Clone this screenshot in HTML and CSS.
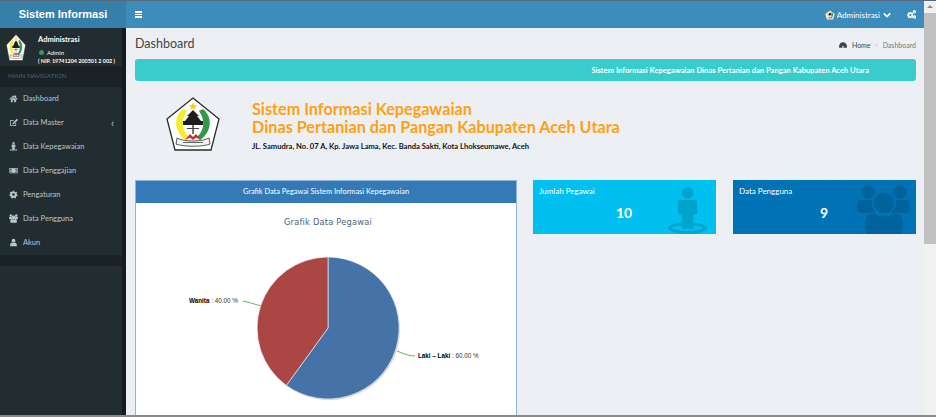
FILE: index.html
```html
<!DOCTYPE html>
<html lang="en">
<head>
    <meta charset="UTF-8">
    <meta name="viewport" content="width=device-width, initial-scale=1.0">
    <title>Sistem Informasi</title>
    <link rel="stylesheet" href="styles.css">
</head>
<body>

    <!-- Shared icons -->
    <svg class="icon-defs" aria-hidden="true">
        <symbol id="logo" viewBox="0 0 54 54" preserveAspectRatio="none">
            <path d="M27 1 L53 22 L45 53 L9 53 L1 22 Z" fill="#fff" stroke="#2b2b2b" stroke-width="1.3"/>
            <path d="M17 12 C7 20 8 35 20 43 L23 40 C15 33 15 22 21 14 Z" fill="#f7ec2c"/>
            <path d="M37 12 C47 20 46 35 34 43 L31 40 C39 33 39 22 33 14 Z" fill="#2f9a48"/>
            <path d="M27 5 l1.200 3 3.200 .2 -2.500 2 .8 3.100 -2.700 -1.700 -2.700 1.700 .8 -3.100 -2.500 -2 3.200 -.2 Z" fill="#f3d21f"/>
            <path d="M27 13 L33 19 L31 19 L35 24 L37 24 L37 28 L17 28 L17 24 L19 24 L23 19 L21 19 Z" fill="#1d1d1d"/>
            <rect x="26.300" y="28" width="1.500" height="9" fill="#444"/>
            <rect x="21" y="31" width="12" height="1" fill="#444"/>
            <path d="M19 43 L24 37 L27 40 L30 37 L35 43 L30 40.500 L27 43 L24 40.500 Z" fill="#d4242a"/>
            <path d="M11 41 C18 45 36 45 43 41 L44 47 C36 50 18 50 10 47 Z" fill="#f4f4f4" stroke="#333" stroke-width=".8"/>
            <rect x="17" y="45" width="20" height="1" fill="#666"/>
        </symbol>
        <symbol id="i-home" viewBox="0 0 24 24"><path d="M12 3 L1 13 L3 15 L12 7 L21 15 L23 13 L19 9.500 V4 H16 V6.500 Z M5 15.500 V22 H10 V16 H14 V22 H19 V15.500 L12 9.500 Z"/></symbol>
        <symbol id="i-edit" viewBox="0 0 24 24"><path d="M3 5 H14 L12 7 H5 V19 H17 V14 L19 12 V21 H3 Z M21 2 L24 5 L13 16 L9 17 L10 13 Z"/></symbol>
        <symbol id="i-street" viewBox="0 0 40 48"><circle cx="20" cy="6" r="6"/><path d="M13 13 H27 C29 13 30 14 30 16 V26 C30 27.500 29 28 27 28 H26 V41 C26 42 25 43 24 43 H16 C15 43 14 42 14 41 V28 H13 C11 28 10 27.500 10 26 V16 C10 14 11 13 13 13 Z"/><path fill-rule="evenodd" d="M20 36 C31 36 40 38.500 40 42 C40 45.500 31 48 20 48 C9 48 0 45.500 0 42 C0 38.500 9 36 20 36 Z M20 39 C11 39 4 40.500 4 42 C4 43.500 11 45 20 45 C29 45 36 43.500 36 42 C36 40.500 29 39 20 39 Z"/></symbol>
        <symbol id="i-money" viewBox="0 0 24 24"><path fill-rule="evenodd" d="M1 5 H23 V19 H1 Z M3 7 V17 H21 V7 Z M12 8 A4 4.500 0 1 1 12 16.500 A4 4.500 0 1 1 12 8 Z M4 9 V15 L7 15 C7.500 13 7.500 11 7 9 Z M20 9 H17 C16.500 11 16.500 13 17 15 H20 Z"/></symbol>
        <symbol id="i-cog" viewBox="0 0 24 24"><path fill-rule="evenodd" d="M10 2 H14 L14.600 5 L17 6 L19.600 4.400 L22 7 L20 9.500 L21 12 L23 13.500 L22 16 L19.500 16.500 L18 19 L18.500 21 L15 22.500 L13.500 20.500 H10.500 L9 22.500 L5.500 21 L6 18.500 L4 16.500 L1.500 16 L1 12.500 L3.400 11 L3.800 8.500 L2 6.500 L5 4 L7 5.500 L9.500 4.500 Z M12 8.500 A3.500 3.500 0 1 0 12 15.500 A3.500 3.500 0 1 0 12 8.500 Z"/></symbol>
        <symbol id="i-users" viewBox="0 0 53 50"><circle cx="11" cy="7" r="7"/><circle cx="43" cy="7" r="7"/><path d="M0 20 C0 17 2 15 5 15 H16 C15 20 16 25 19 28 H4 C1 28 0 26 0 24 Z M53 20 C53 17 51 15 48 15 H37 C38 20 37 25 34 28 H49 C52 28 53 26 53 24 Z"/><circle cx="27" cy="18" r="11" stroke="currentColor" stroke-width="1.500"/><path d="M16 28 C20 32 34 32 38 28 C43 28 46 32 46 38 V46 C46 48 44 50 42 50 H12 C10 50 8 48 8 46 V38 C8 32 11 28 16 28 Z" stroke="currentColor" stroke-width="1"/></symbol>
        <symbol id="i-user" viewBox="0 0 24 24"><circle cx="12" cy="7" r="5"/><path d="M7 12 C9 14 15 14 17 12 C20 13 21 16 21 22 H3 C3 16 4 13 7 12 Z"/></symbol>
        <symbol id="i-cogs" viewBox="0 0 24 24"><path fill-rule="evenodd" d="M7 5 H11 L11.500 7.500 L14 6.500 L16.500 9 L15 11 L17 12 V15.500 L15 16 L16.500 18.500 L14 21 L11.500 19.500 L11 22 H7 L6.500 19.500 L4 21 L1.500 18.500 L3 16 L0 15.500 V12 L3 11 L1.500 9 L4 6.500 L6.500 7.500 Z M9 10.500 A3 3 0 1 0 9 16.500 A3 3 0 1 0 9 10.500 Z"/><path fill-rule="evenodd" d="M19.500 0 A4.500 4.500 0 1 1 19.500 9 A4.500 4.500 0 1 1 19.500 0 Z M19.500 3 A1.500 1.500 0 1 0 19.500 6 A1.500 1.500 0 1 0 19.500 3 Z"/><path fill-rule="evenodd" d="M20 14 A4.500 4.500 0 1 1 20 23 A4.500 4.500 0 1 1 20 14 Z M20 17 A1.500 1.500 0 1 0 20 20 A1.500 1.500 0 1 0 20 17 Z"/></symbol>
        <symbol id="i-gauge" viewBox="0 0 24 24"><path fill-rule="evenodd" d="M12 4 C5 4 0 10 0 17 C0 18 .3 19 .8 20 H23.200 C23.700 19 24 18 24 17 C24 10 19 4 12 4 Z M12 15 A2.500 2.500 0 1 0 12 20 A2.500 2.500 0 1 0 12 15 Z"/></symbol>
    </svg>

    <div class="window">
        <!-- Sidebar -->
        <aside class="sidebar">
            <div class="brand">Sistem Informasi</div>
            <div class="user-panel">
                <svg class="user-logo"><use href="#logo"/></svg>
                <div class="user-info">
                    <p class="user-name">Administrasi</p>
                    <p class="user-role"><span class="dot"></span>Admin</p>
                    <p class="user-nip">( NIP. 19741204 200501 2 002 )</p>
                </div>
            </div>
            <div class="nav-header">MAIN NAVIGATION</div>
            <nav class="menu">
                <a href="#"><svg class="ico"><use href="#i-home"/></svg>Dashboard</a>
                <a href="#"><svg class="ico"><use href="#i-edit"/></svg>Data Master<span class="caret">&#8249;</span></a>
                <a href="#"><svg class="ico"><use href="#i-street"/></svg>Data Kepegawaian</a>
                <a href="#"><svg class="ico"><use href="#i-money"/></svg>Data Penggajian</a>
                <a href="#"><svg class="ico"><use href="#i-cog"/></svg>Pengaturan</a>
                <a href="#"><svg class="ico"><use href="#i-users"/></svg>Data Pengguna</a>
                <a href="#"><svg class="ico"><use href="#i-user"/></svg>Akun</a>
            </nav>
            <div class="menu-foot"></div>
        </aside>

        <div class="main">
            <!-- Navbar -->
            <header class="navbar">
                <div class="burger"><span></span><span></span><span></span></div>
                <div class="nav-right">
                    <svg class="nav-logo"><use href="#logo"/></svg>
                    <span class="nav-user">Administrasi</span>
                    <svg class="chevron" viewBox="0 0 10 6"><path d="M1 1 L5 5 L9 1" fill="none" stroke="#fff" stroke-width="2"/></svg>
                    <svg class="nav-cogs"><use href="#i-cogs"/></svg>
                </div>
            </header>

            <!-- Page content -->
            <main class="content">
                <div class="title-row">
                    <h1>Dashboard</h1>
                    <div class="crumbs">
                        <svg class="crumb-ico"><use href="#i-gauge"/></svg>
                        <span>Home</span>
                        <span class="sep">&gt;</span>
                        <span class="crumb-active">Dashboard</span>
                    </div>
                </div>

                <div class="marquee">Sistem Informasi Kepegawaian Dinas Pertanian dan Pangan Kabupaten Aceh Utara</div>

                <section class="agency">
                    <svg class="agency-logo"><use href="#logo"/></svg>
                    <div class="agency-text">
                        <h2>Sistem Informasi Kepegawaian<br>Dinas Pertanian dan Pangan Kabupaten Aceh Utara</h2>
                        <p>JL. Samudra, No. 07 A, Kp. Jawa Lama, Kec. Banda Sakti, Kota Lhokseumawe, Aceh</p>
                    </div>
                </section>

                <div class="columns">
                    <section class="panel">
                        <div class="panel-head">Grafik Data Pegawai Sistem Informasi Kepegawaian</div>
                        <div class="panel-body">
                            <svg class="chart" viewBox="0 0 380 215">
                                <text class="chart-title" x="192" y="22" text-anchor="middle">Grafik Data Pegawai</text>
                                <path class="leader" d="M107 98 C112 99 118 101 125 103"/>
                                <path class="leader" d="M261 148 C266 150 272 153 279 153"/>
                                <circle cx="193" cy="126" r="71" fill="#cfcfcf"/>
                                <path d="M192 54 A71 71 0 1 1 150.300 182.400 L192 125 Z" fill="#4572a7" stroke="#fff" stroke-width=".6"/>
                                <path d="M192 125 L150.300 182.400 A71 71 0 0 1 192 54 Z" fill="#aa4643" stroke="#fff" stroke-width=".6"/>
                                <text class="chart-label" x="53" y="100"><tspan class="strong">Wanita</tspan> : 40.00 %</text>
                                <text class="chart-label" x="282" y="155"><tspan class="strong">Laki – Laki</tspan> : 60.00 %</text>
                            </svg>
                        </div>
                    </section>

                    <div class="stat stat-cyan">
                        <p class="stat-label">Jumlah Pegawai</p>
                        <p class="stat-value">10</p>
                        <svg class="stat-ico ico-street"><use href="#i-street"/></svg>
                    </div>
                    <div class="stat stat-blue">
                        <p class="stat-label">Data Pengguna</p>
                        <p class="stat-value">9</p>
                        <svg class="stat-ico ico-users"><use href="#i-users"/></svg>
                    </div>
                </div>
            </main>
        </div>

        <!-- Scrollbar -->
        <div class="scrollbar">
            <div class="scroll-up"></div>
            <div class="scroll-thumb"></div>
        </div>
    </div>
</body>
</html>
```

FILE: styles.css
```css
/* Reset and global styling */
* {
    margin: 0;
    padding: 0;
    box-sizing: border-box;
}
html, body {
    height: 100%;
    overflow: hidden;
}
body {
    font-family: Lato, 'Noto Sans', Arial, sans-serif;
    background-color: #ecf0f5;
    color: #333;
}
.icon-defs {
    display: none;
}
.window {
    display: flex;
    height: 417px;
    border-top: 1px solid #56697a;
    border-bottom: 2px solid #8a8a8a;
    overflow: hidden;
}

/* Sidebar styling */
.sidebar {
    width: 126px;
    flex-shrink: 0;
    background-color: #222d32;
    border-right: 4px solid #151c1f;
    color: #b8c7ce;
}
.brand {
    height: 27px;
    margin-right: -4px;
    background-color: #367fa9;
    color: #fff;
    font-family: 'Liberation Sans', Arial, sans-serif;
    font-size: 11px;
    font-weight: bold;
    line-height: 27px;
    text-align: center;
}
.user-panel {
    display: flex;
    height: 38px;
    padding: 6px 0 0 6px;
    gap: 12px;
}
.user-logo {
    width: 20px;
    height: 27px;
    flex-shrink: 0;
}
.user-info {
    color: #fff;
}
.user-name {
    font-size: 7.500px;
    font-weight: 700;
    line-height: 10px;
    margin-top: 1px;
}
.user-role {
    padding-left: 1px;
    font-size: 6px;
    line-height: 8px;
    margin-top: 4px;
}
.dot {
    display: inline-block;
    width: 5px;
    height: 5px;
    margin-right: 3px;
    border-radius: 50%;
    background-color: #3c9a4a;
}
.user-nip {
    font-size: 5.400px;
    font-weight: 700;
    line-height: 8px;
    white-space: nowrap;
}
.nav-header {
    height: 21px;
    padding-left: 8px;
    background-color: #1a2226;
    color: #4b646f;
    font-size: 6.500px;
    line-height: 20px;
}
.menu {
    display: flex;
    flex-direction: column;
}
.menu a {
    display: flex;
    align-items: center;
    height: 24px;
    padding: 0 0 2px 9px;
    color: #b8c7ce;
    font-size: 7.500px;
    text-decoration: none;
}
.ico {
    width: 9px;
    height: 9px;
    margin-right: 5px;
    fill: #b8c7ce;
    flex-shrink: 0;
}
.caret {
    margin-left: auto;
    margin-right: 8px;
    font-size: 11px;
}
.menu-foot {
    height: 11px;
    background-color: #1a2226;
}

/* Navbar styling */
.main {
    flex: 1;
    min-width: 0;
}
.navbar {
    display: flex;
    justify-content: space-between;
    align-items: center;
    height: 27px;
    padding: 0 8px 0 9px;
    background-color: #3c8dbc;
}
.burger {
    display: flex;
    flex-direction: column;
    gap: 1px;
    width: 7px;
}
.burger span {
    height: 1.500px;
    background-color: #fff;
}
.nav-right {
    display: flex;
    align-items: center;
    color: #fff;
    font-size: 8px;
}
.nav-logo {
    width: 10px;
    height: 10px;
    margin-right: 2px;
}
.chevron {
    width: 8px;
    height: 6px;
    margin-left: 3px;
}
.nav-cogs {
    width: 9px;
    height: 9px;
    margin-left: 16px;
    fill: #fff;
}

/* Page content styling */
.content {
    padding: 0 8px 0 9px;
}
.title-row {
    display: flex;
    justify-content: space-between;
    align-items: center;
    height: 31px;
}
h1 {
    color: #444;
    font-size: 12.500px;
    font-weight: 400;
}
.crumbs {
    display: flex;
    align-items: center;
    gap: 4px;
    color: #444;
    font-size: 7px;
    margin-top: 3px;
}
.crumb-ico {
    width: 8px;
    height: 8px;
    margin-right: 1px;
    fill: #444;
}
.sep {
    color: #ccc;
}
.crumb-active {
    color: #777;
}

.marquee {
    height: 22px;
    padding-right: 47px;
    border-radius: 3px;
    background-color: #39cccc;
    color: #fff;
    font-size: 7.600px;
    font-weight: 700;
    line-height: 23px;
    text-align: right;
}

/* Agency heading */
.agency {
    display: flex;
    height: 99px;
    padding: 16px 0 0 31px;
}
.agency-logo {
    width: 54px;
    height: 54px;
    margin-right: 32px;
}
.agency-text {
    padding-top: 3px;
}
h2 {
    color: #ff9f12;
    font-size: 16.200px;
    font-weight: 700;
    line-height: 18px;
}
.agency-text p {
    margin-top: 5px;
    color: #111;
    font-size: 7.600px;
    font-weight: 700;
}

/* Chart panel and stat boxes */
.columns {
    display: flex;
    align-items: flex-start;
}
.panel {
    width: 382px;
    height: 300px;
    margin-right: 16px;
    border: 1px solid #8fb5dc;
    background-color: #fff;
}
.panel-head {
    height: 22px;
    background-color: #337ab7;
    color: #fff;
    font-size: 7.400px;
    line-height: 22px;
    text-align: center;
}
.chart {
    display: block;
    width: 380px;
    height: 215px;
}
.chart-title {
    fill: #4d6478;
    font-family: 'DejaVu Sans', sans-serif;
    font-size: 8.300px;
    letter-spacing: .2px;
}
.chart-label {
    fill: #333;
    font-family: 'Liberation Sans', Arial, sans-serif;
    font-size: 6.300px;
}
.strong {
    fill: #000;
    font-weight: bold;
}
.leader {
    fill: none;
    stroke: #5cb85c;
    stroke-width: 1;
}
.stat {
    position: relative;
    width: 183px;
    height: 54px;
    color: #fff;
    overflow: hidden;
}
.stat-cyan {
    margin-right: 17px;
    background-color: #00c0ef;
}
.stat-blue {
    background-color: #0073b7;
}
.stat-label {
    padding: 6px 0 0 6px;
    font-size: 8px;
    line-height: 11px;
}
.stat-value {
    padding-top: 7px;
    padding-right: 1px;
    font-size: 14px;
    font-weight: 700;
    line-height: 18px;
    text-align: center;
}
.stat-ico {
    position: absolute;
}
.ico-street {
    top: 7px;
    right: 9px;
    width: 39px;
    height: 47px;
    fill: #00a3cb;
}
.ico-users {
    top: 5px;
    right: 6px;
    width: 53px;
    height: 50px;
    fill: #00639d;
    color: #0073b7;
}

/* Fake browser scrollbar */
.scrollbar {
    width: 12px;
    flex-shrink: 0;
    background-color: #f1f1f1;
}
.scroll-up {
    position: relative;
    height: 12px;
}
.scroll-up::after {
    content: "";
    position: absolute;
    top: 4px;
    left: 3px;
    border-left: 3px solid transparent;
    border-right: 3px solid transparent;
    border-bottom: 3px solid #8a8a8a;
}
.scroll-thumb {
    height: 231px;
    background-color: #c1c1c1;
}
```
